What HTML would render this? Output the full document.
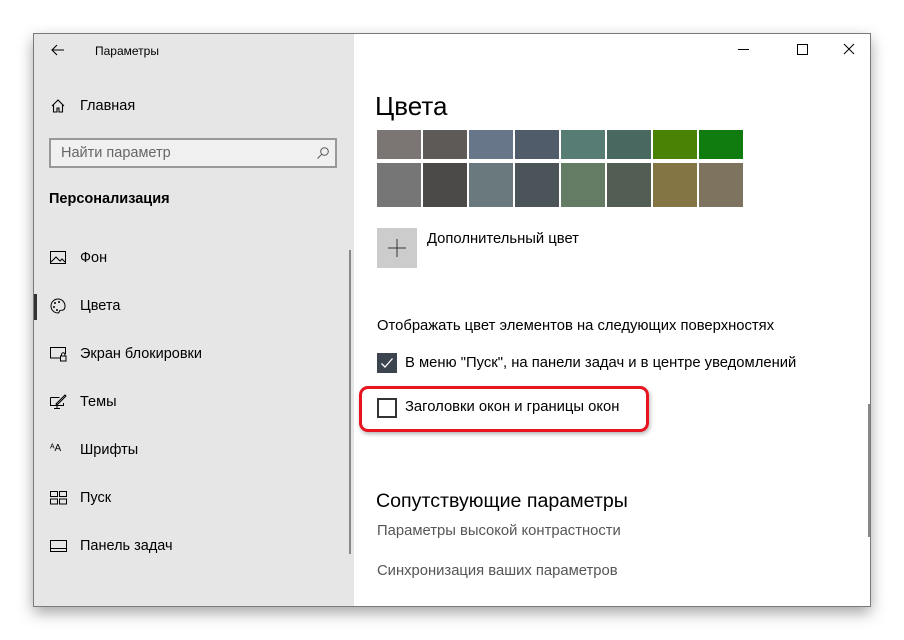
<!DOCTYPE html>
<html><head><meta charset="utf-8"><style>
*{margin:0;padding:0;box-sizing:border-box}
body{width:904px;height:640px;background:#fff;position:relative;overflow:hidden;font-family:"Liberation Sans","DejaVu Sans",sans-serif;color:#000}
.win{position:absolute;left:33px;top:33px;width:838px;height:574px;border:1px solid #7a7a7a;background:#fff;box-shadow:0 6px 14px rgba(0,0,0,.35);overflow:hidden}
.side{position:absolute;left:0;top:0;width:320px;height:100%;background:#e6e6e6}
.a{position:absolute;white-space:nowrap}
.nav{position:absolute;left:46px;font-size:14.5px;color:#000}
.ic{position:absolute;left:16px}
.sw{position:absolute;width:44px}
.t{font-size:14.8px}
</style></head><body>
<div class="win">
<div class="side">
<svg class="a" style="left:16px;top:8px" width="16" height="16" viewBox="0 0 16 16"><path d="M14 8H2M7 3L2 8l5 5" fill="none" stroke="#000" stroke-width="1.1"/></svg>
<div class="a" style="left:61px;top:10px;font-size:12px">Параметры</div>
<svg class="ic" style="top:64px" width="16" height="16" viewBox="0 0 16 16"><path d="M2 8L8 2l6 6M3.5 6.5V14h3.5v-4h2v4h3.5V6.5" fill="none" stroke="#000" stroke-width="1.1"/></svg>
<div class="nav" style="top:64px">Главная</div>
<div class="a" style="left:15px;top:104px;width:288px;height:30px;border:2px solid #999;background:#f0f0f0"></div>
<div class="a" style="left:27px;top:111px;font-size:14.5px;color:#666">Найти параметр</div>
<svg class="a" style="left:282px;top:112px" width="14" height="14" viewBox="0 0 14 14"><circle cx="8.5" cy="5.5" r="3.8" fill="none" stroke="#555"/><path d="M5.7 8.3L1.5 12.5" stroke="#555"/></svg>
<div class="a" style="left:15px;top:157px;font-size:14.5px;font-weight:bold">Персонализация</div>
<div class="a" style="left:0;top:260px;width:3px;height:26px;background:#333"></div>
<svg class="ic" style="top:217px" width="16" height="14" viewBox="0 0 16 14"><rect x=".5" y=".5" width="15" height="12" fill="none" stroke="#000"/><path d="M1 11l5-5 4 4 2-2 3 3" fill="none" stroke="#000"/></svg>
<div class="nav" style="top:216px">Фон</div>
<svg class="ic" style="top:264px" width="16" height="16" viewBox="0 0 16 16"><path d="M8 1a7 7 0 1 0 0 14c1.5 0 1-2 2-2.5 1.5-.5 5 .5 5-4A7 7 0 0 0 8 1z" fill="none" stroke="#000"/><circle cx="5" cy="5" r="1" /><circle cx="9" cy="4" r="1"/><circle cx="4" cy="9" r="1"/><circle cx="7" cy="12" r="1"/></svg>
<div class="nav" style="top:264px">Цвета</div>
<svg class="ic" style="top:313px" width="17" height="15" viewBox="0 0 17 15"><path d="M10 11H.5V.5h15V7" fill="none" stroke="#000"/><rect x="10.5" y="9" width="5.5" height="5" fill="none" stroke="#000"/><path d="M11.5 9V7.5a1.7 1.7 0 0 1 3.4 0V9" fill="none" stroke="#000"/></svg>
<div class="nav" style="top:312px">Экран блокировки</div>
<svg class="ic" style="top:360px" width="17" height="16" viewBox="0 0 17 16"><path d="M.5 3.5h9M.5 3.5v8h13V9M7 11.5v3M4 14.5h6M6 10l9-9 1 1-9 9z" fill="none" stroke="#000"/></svg>
<div class="nav" style="top:360px">Темы</div>
<div class="a" style="left:16px;top:409px;font-size:10px">ᴬA</div>
<div class="nav" style="top:408px">Шрифты</div>
<svg class="ic" style="top:457px" width="17" height="14" viewBox="0 0 17 14"><rect x=".5" y=".5" width="7" height="5" fill="none" stroke="#000"/><rect x="9.5" y=".5" width="7" height="5" fill="none" stroke="#000"/><rect x=".5" y="8" width="7" height="5" fill="none" stroke="#000"/><rect x="9.5" y="8" width="7" height="5" fill="none" stroke="#000"/></svg>
<div class="nav" style="top:456px">Пуск</div>
<svg class="ic" style="top:506px" width="17" height="12" viewBox="0 0 17 12"><rect x=".5" y=".5" width="16" height="11" fill="none" stroke="#000"/><path d="M1 8.5h15" stroke="#000"/></svg>
<div class="nav" style="top:504px">Панель задач</div>
<div class="a" style="left:315px;top:216px;width:2px;height:304px;background:#888"></div>
</div>
<div class="a" style="left:704px;top:15px;width:11px;height:1px;background:#000"></div>
<div class="a" style="left:763px;top:10px;width:11px;height:11px;border:1px solid #000"></div>
<svg class="a" style="left:809px;top:9px" width="12" height="12" viewBox="0 0 12 12"><path d="M1 1l10 10M11 1L1 11" stroke="#000"/></svg>
<div class="a" style="left:341px;top:57px;font-size:26px">Цвета</div>
<div class="sw" style="left:343px;top:96px;height:29px;background:#7b7574"></div>
<div class="sw" style="left:389px;top:96px;height:29px;background:#5d5a58"></div>
<div class="sw" style="left:435px;top:96px;height:29px;background:#68768a"></div>
<div class="sw" style="left:481px;top:96px;height:29px;background:#515c6b"></div>
<div class="sw" style="left:527px;top:96px;height:29px;background:#567c73"></div>
<div class="sw" style="left:573px;top:96px;height:29px;background:#486860"></div>
<div class="sw" style="left:619px;top:96px;height:29px;background:#498205"></div>
<div class="sw" style="left:665px;top:96px;height:29px;background:#107c10"></div>
<div class="sw" style="left:343px;top:129px;height:44px;background:#767676"></div>
<div class="sw" style="left:389px;top:129px;height:44px;background:#4c4a48"></div>
<div class="sw" style="left:435px;top:129px;height:44px;background:#69797e"></div>
<div class="sw" style="left:481px;top:129px;height:44px;background:#4a5459"></div>
<div class="sw" style="left:527px;top:129px;height:44px;background:#647c64"></div>
<div class="sw" style="left:573px;top:129px;height:44px;background:#525e54"></div>
<div class="sw" style="left:619px;top:129px;height:44px;background:#847545"></div>
<div class="sw" style="left:665px;top:129px;height:44px;background:#7e735f"></div>
<div class="a" style="left:343px;top:194px;width:40px;height:40px;background:#ccc"></div>
<svg class="a" style="left:353px;top:204px" width="20" height="20" viewBox="0 0 20 20"><path d="M10 1v18M1 10h18" stroke="#333" stroke-width="1"/></svg>
<div class="a t" style="left:393px;top:197px">Дополнительный цвет</div>
<div class="a t" style="left:343px;top:284px">Отображать цвет элементов на следующих поверхностях</div>
<div class="a" style="left:343px;top:319px;width:20px;height:20px;background:#3c4450"></div>
<svg class="a" style="left:346px;top:322px" width="14" height="14" viewBox="0 0 14 14"><path d="M1.5 7.5l3.5 3.5 7.5-8.5" fill="none" stroke="#fff" stroke-width="1.3"/></svg>
<div class="a t" style="left:371px;top:321px">В меню "Пуск", на панели задач и в центре уведомлений</div>
<div class="a" style="left:343px;top:364px;width:20px;height:20px;border:2px solid #333"></div>
<div class="a t" style="left:371px;top:365px">Заголовки окон и границы окон</div>
<div class="a" style="left:325px;top:352px;width:290px;height:46px;border:3px solid #e8141e;border-radius:9px;box-shadow:1px 2px 4px rgba(0,0,0,.3)"></div>
<div class="a" style="left:342px;top:456px;font-size:19.6px">Сопутствующие параметры</div>
<div class="a t" style="left:343px;top:489px;color:#555">Параметры высокой контрастности</div>
<div class="a t" style="left:343px;top:529px;color:#555">Синхронизация ваших параметров</div>
<div class="a" style="left:834px;top:370px;width:2px;height:133px;background:#888"></div>
</div>
</body></html>
